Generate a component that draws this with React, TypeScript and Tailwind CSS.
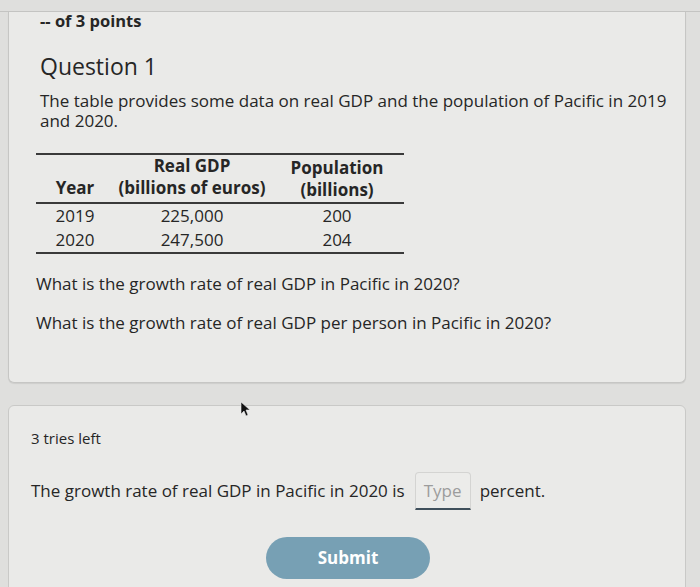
import React from "react";

export default function App() {
  const font = { fontFamily: '"Open Sans", "Noto Sans", sans-serif' };
  return (
    <div
      className="relative w-[700px] h-[587px] overflow-hidden bg-[#dfdfdd] text-[#262626]"
      style={font}
    >
      <div className="h-[12px] border-b border-[#c4c4c2]" />
      <div className="flex flex-col pl-[8px] pr-[14px]">
        {/* Card 1 */}
        <div className="h-[371px] bg-[#eaeae8] border-x border-b border-[#c6c6c4] rounded-b-[6px] pl-[31px] pr-[6px] shadow-[0_1px_1px_rgba(0,0,0,0.08)]">
          <div className="text-[16.5px] leading-[18px] font-bold">-- of 3 points</div>
          <div className="mt-[20px] text-[23px] leading-[32px] font-normal">Question 1</div>
          <p className="mt-[9px] text-[17px] leading-[20px] max-w-[632px]">
            The table provides some data on real GDP and the population of Pacific in 2019 and 2020.
          </p>
          <div className="mt-[22px] -ml-[4px] w-[368px] border-t-2 border-b-2 border-[#3a3a3a] text-[17px]">
            <div className="flex border-b-2 border-[#3a3a3a] h-[49px] font-bold leading-[22px]">
              <div className="w-[78px] flex flex-col justify-end items-center pb-[3px]">Year</div>
              <div className="w-[156px] flex flex-col justify-end items-center pb-[3px]">
                <span>Real GDP</span>
                <span>(billions of euros)</span>
              </div>
              <div className="w-[134px] flex flex-col justify-end items-center pb-[1px]">
                <span>Population</span>
                <span>(billions)</span>
              </div>
            </div>
            <div className="flex h-[24px] items-center">
              <div className="w-[78px] text-center">2019</div>
              <div className="w-[156px] text-center">225,000</div>
              <div className="w-[134px] text-center">200</div>
            </div>
            <div className="flex h-[24px] items-center">
              <div className="w-[78px] text-center">2020</div>
              <div className="w-[156px] text-center">247,500</div>
              <div className="w-[134px] text-center">204</div>
            </div>
          </div>
          <p className="mt-[20px] -ml-[4px] text-[17px] leading-[20px]">
            What is the growth rate of real GDP in Pacific in 2020?
          </p>
          <p className="mt-[19px] -ml-[4px] text-[17px] leading-[20px]">
            What is the growth rate of real GDP per person in Pacific in 2020?
          </p>
        </div>

        {/* Card 2 */}
        <div className="mt-[22px] h-[200px] bg-[#eaeae8] border border-[#c9c9c7] rounded-[6px] pl-[22px] pr-[20px] pt-[22px]">
          <div className="text-[15px] leading-[20px]">3 tries left</div>
          <div className="mt-[24px] flex items-center text-[17px] leading-[20px]">
            <span>The growth rate of real GDP in Pacific in 2020 is</span>
            <span className="ml-[10px] w-[56px] h-[38px] flex items-center justify-center border border-[#d4d4d2] border-b-2 border-b-[#40505c] rounded-t-[4px] text-[#9c9c9c] bg-[#ececea]">
              Type
            </span>
            <span className="ml-[9px]">percent.</span>
          </div>
          <div className="mt-[27px] flex">
            <button className="ml-[235px] w-[164px] h-[42px] rounded-full bg-[#77a0b4] text-white font-bold text-[17px]">
              Submit
            </button>
          </div>
        </div>
      </div>

      {/* mouse cursor */}
      <svg
        className="absolute left-[240px] top-[401px]"
        width="10"
        height="16"
        viewBox="0 0 10 16"
      >
        <path d="M1 1 L1 13 L4 10 L6 15 L8 14 L6 9 L10 9 Z" fill="#111" stroke="#eee" strokeWidth="0.6" />
      </svg>
    </div>
  );
}
